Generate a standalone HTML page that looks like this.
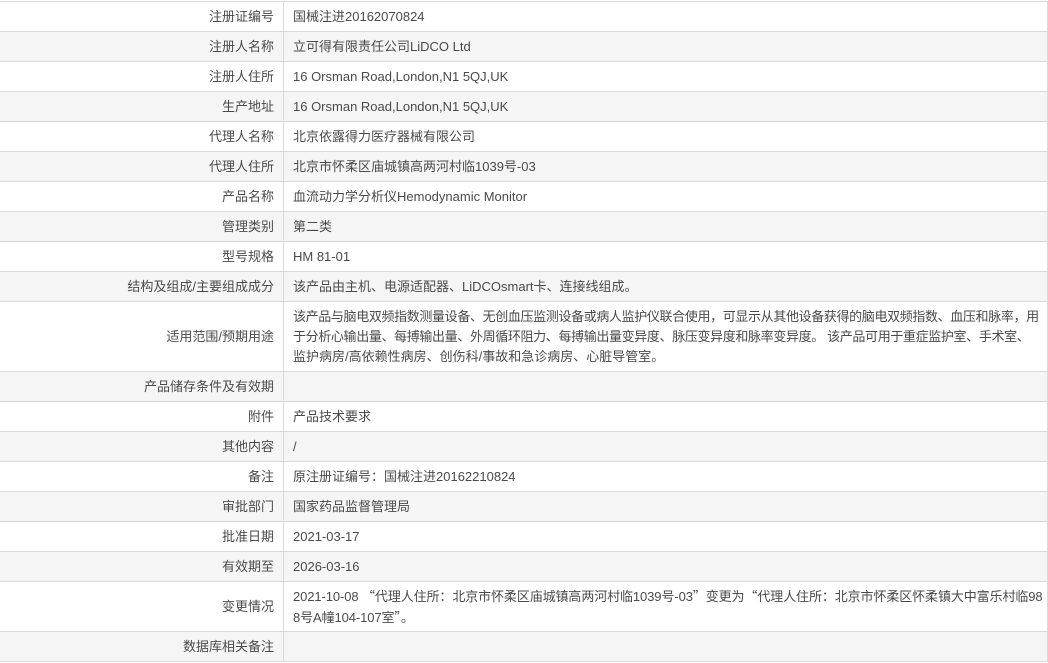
<!DOCTYPE html>
<html><head><meta charset="utf-8"><style>
html,body{margin:0;padding:0;background:#fff;}
body{width:1048px;height:663px;overflow:hidden;font-family:"Liberation Sans","Noto Sans CJK SC",sans-serif;font-size:13px;color:#4a4a4a;position:relative;}
table{border-collapse:collapse;position:absolute;left:0;top:1px;width:1048px;table-layout:fixed;}
td{border:1px solid #d9d9d9;height:29px;padding:0;line-height:20px;vertical-align:middle;white-space:nowrap;overflow:hidden;}
td.l{width:274px;text-align:right;padding-right:9px;border-left:none;}
td.v{padding-left:9px;padding-right:0;}
tr:nth-child(even) td{background:#f5f5f5;}
.q{font-family:"Noto Sans CJK SC",sans-serif;}
.t{letter-spacing:-0.36px;}
.t2{letter-spacing:-0.1px;}
</style></head><body>
<table>
<tr><td class="l">注册证编号</td><td class="v">国械注进20162070824</td></tr>
<tr><td class="l">注册人名称</td><td class="v">立可得有限责任公司LiDCO Ltd</td></tr>
<tr><td class="l">注册人住所</td><td class="v">16 Orsman Road,London,N1 5QJ,UK</td></tr>
<tr><td class="l">生产地址</td><td class="v">16 Orsman Road,London,N1 5QJ,UK</td></tr>
<tr><td class="l">代理人名称</td><td class="v">北京依露得力医疗器械有限公司</td></tr>
<tr><td class="l">代理人住所</td><td class="v">北京市怀柔区庙城镇高两河村临1039号-03</td></tr>
<tr><td class="l">产品名称</td><td class="v">血流动力学分析仪Hemodynamic Monitor</td></tr>
<tr><td class="l">管理类别</td><td class="v">第二类</td></tr>
<tr><td class="l">型号规格</td><td class="v">HM 81-01</td></tr>
<tr><td class="l">结构及组成/主要组成成分</td><td class="v">该产品由主机、电源适配器、LiDCOsmart卡、连接线组成。</td></tr>
<tr><td class="l" style="height:69px">适用范围/预期用途</td><td class="v"><span class="t">该产品与脑电双频指数测量设备、无创血压监测设备或病人监护仪联合使用，可显示从其他设备获得的脑电双频指数、血压和脉率，用</span><br><span class="t">于分析心输出量、每搏输出量、外周循环阻力、每搏输出量变异度、脉压变异度和脉率变异度。 该产品可用于重症监护室、手术室、</span><br>监护病房/高依赖性病房、创伤科/事故和急诊病房、心脏导管室。</td></tr>
<tr><td class="l">产品储存条件及有效期</td><td class="v"></td></tr>
<tr><td class="l">附件</td><td class="v">产品技术要求</td></tr>
<tr><td class="l">其他内容</td><td class="v">/</td></tr>
<tr><td class="l">备注</td><td class="v">原注册证编号：国械注进20162210824</td></tr>
<tr><td class="l">审批部门</td><td class="v">国家药品监督管理局</td></tr>
<tr><td class="l">批准日期</td><td class="v">2021-03-17</td></tr>
<tr><td class="l">有效期至</td><td class="v">2026-03-16</td></tr>
<tr><td class="l" style="height:49px">变更情况</td><td class="v t2">2021-10-08 <span class="q">“</span>代理人住所：北京市怀柔区庙城镇高两河村临1039号-03<span class="q">”</span>变更为<span class="q">“</span>代理人住所：北京市怀柔区怀柔镇大中富乐村临98<br>8号A幢104-107室<span class="q">”</span>。</td></tr>
<tr><td class="l">数据库相关备注</td><td class="v"></td></tr>
</table>
</body></html>
